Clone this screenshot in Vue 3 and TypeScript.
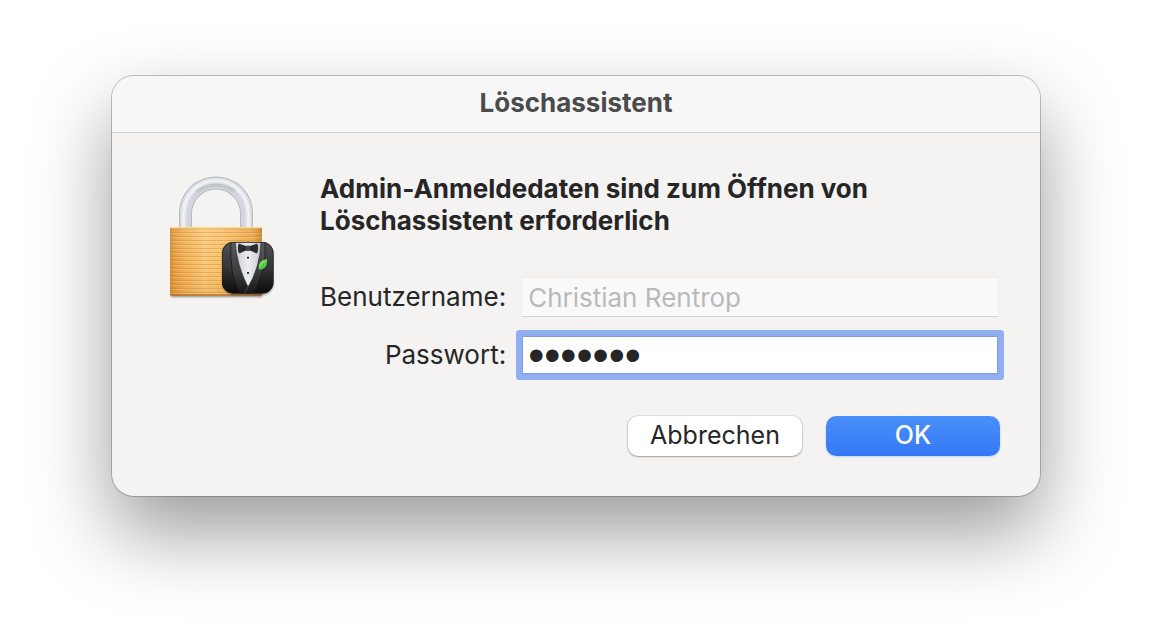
<script setup lang="ts">
import { onMounted, ref } from 'vue'

const appName = 'Löschassistent'
const username = ref('Christian Rentrop')
const password = ref('passwor')
const open = ref(true)
const passwordField = ref<HTMLInputElement | null>(null)

// y offsets of the brushed grooves on the padlock body
const grooves = Array.from({ length: 16 }, (_, i) => 232 + i * 4)

onMounted(() => passwordField.value?.focus())

function close() {
  open.value = false
}
</script>

<template>
  <main class="desktop">
    <section v-if="open" class="dialog" role="dialog" aria-labelledby="dialog-title">
      <header class="titlebar">
        <h1 id="dialog-title">{{ appName }}</h1>
      </header>
      <div class="body">
        <svg class="lock" viewBox="162 170 120 132" aria-hidden="true">
          <defs>
            <linearGradient id="gold" x1="0" x2="1" y1="0" y2="0">
              <stop offset="0" stop-color="#c9822f" />
              <stop offset="0.04" stop-color="#e09a42" />
              <stop offset="0.14" stop-color="#efaf57" />
              <stop offset="0.38" stop-color="#fbcc80" />
              <stop offset="0.6" stop-color="#f8c16e" />
              <stop offset="0.9" stop-color="#eaa549" />
              <stop offset="1" stop-color="#c47a26" />
            </linearGradient>
            <linearGradient id="goldShade" x1="0" x2="0" y1="0" y2="1">
              <stop offset="0" stop-color="#fff" stop-opacity="0.1" />
              <stop offset="0.5" stop-color="#f5a030" stop-opacity="0.08" />
              <stop offset="1" stop-color="#c77818" stop-opacity="0.22" />
            </linearGradient>
            <linearGradient id="cloth" x1="0" x2="0" y1="0" y2="1">
              <stop offset="0" stop-color="#505152" />
              <stop offset="0.5" stop-color="#343536" />
              <stop offset="1" stop-color="#0a0a0a" />
            </linearGradient>
            <linearGradient id="lapel" x1="0" x2="0" y1="0" y2="1">
              <stop offset="0" stop-color="#5a5b5c" />
              <stop offset="0.6" stop-color="#3a3b3c" />
              <stop offset="1" stop-color="#141414" />
            </linearGradient>
            <linearGradient id="shirt" x1="0" x2="1" y1="0" y2="0">
              <stop offset="0" stop-color="#c6cace" />
              <stop offset="0.5" stop-color="#eceef0" />
              <stop offset="1" stop-color="#c6cace" />
            </linearGradient>
            <linearGradient id="leaf" x1="0" x2="1" y1="0" y2="1">
              <stop offset="0" stop-color="#a0f780" />
              <stop offset="1" stop-color="#2fb82d" />
            </linearGradient>
            <filter id="soft" x="-20%" y="-200%" width="140%" height="500%">
              <feGaussianBlur stdDeviation="1" />
            </filter>
            <filter id="sheen" x="-20%" y="-20%" width="140%" height="140%">
              <feGaussianBlur stdDeviation="1.2" />
            </filter>
            <clipPath id="badge">
              <rect x="222" y="242" width="51.500" height="51.500" rx="11" />
            </clipPath>
            <clipPath id="aboveBody">
              <rect x="162" y="170" width="110" height="58" />
            </clipPath>
          </defs>

          <g fill="none" clip-path="url(#aboveBody)">
            <path d="M185.500 232V213.500a30.500 30.500 0 0 1 61 0V232" stroke="#a9aeb5" stroke-width="13" />
            <path d="M185.500 232V213.500a30.500 30.500 0 0 1 61 0V232" stroke="#d3d7dd" stroke-width="11.600" />
            <path d="M183.700 232V213a32.300 32.300 0 0 1 64.600 0V232" stroke="#f4f6f9" stroke-width="3.500" filter="url(#sheen)" />
            <path d="M197 192q8-7 19-7t19 7" stroke="#8d939b" stroke-width="2.500" opacity="0.400" filter="url(#sheen)" />
          </g>

          <rect x="171" y="294" width="91" height="3" fill="#555" opacity="0.650" filter="url(#soft)" />
          <rect x="170" y="227" width="92" height="68.500" rx="1.500" fill="url(#gold)" />
          <rect x="170" y="227" width="92" height="68.500" rx="1.500" fill="url(#goldShade)" />
          <g v-for="y in grooves" :key="y">
            <rect x="170" :y="y" width="92" height="1" fill="#cf8a36" opacity="0.450" />
            <rect x="170" :y="y + 1" width="92" height="1" fill="#ffe1a4" opacity="0.250" />
          </g>
          <rect x="170.500" y="227" width="91" height="1.500" rx="0.700" fill="#f8dc91" />
          <rect x="170.500" y="228.500" width="91" height="0.800" fill="#c58a3b" opacity="0.500" />
          <rect x="170.500" y="294.500" width="91" height="1" fill="#9c5d17" />

          <rect x="223" y="244" width="50" height="51" rx="11" fill="#333" opacity="0.550" filter="url(#soft)" />
          <g clip-path="url(#badge)">
            <rect x="222" y="242" width="52" height="52" fill="url(#cloth)" />
            <path d="M231 242Q229 274 240 294H244L248 287Q237 266 235 242Z" fill="url(#lapel)" />
            <path d="M265 242Q267 272 253 294H244L248 287Q260 268 261 242Z" fill="url(#lapel)" />
            <path d="M235 242H261Q260 268 248 287Q237 266 235 242Z" fill="url(#shirt)" stroke="#1b1b1b" stroke-width="0.600" />
            <path d="M231 242Q229 274 240 294M265 242Q267 272 253 294" fill="none" stroke="#161616" stroke-width="0.700" />
            <path d="M248 287l-4 7" stroke="#666" stroke-width="0.600" />
            <path d="M238.300 244.500q1-1.300 3 0l4.700 1.500h4l4.700-1.500q2-1.300 3 0 1 4-.2 8-.8 1.300-2.800 0L250 250.500h-4l-4.700 2q-2 1.300-2.800 0-1-4-.2-8Z" fill="#2b2c2d" />
            <rect x="246" y="245.500" width="4" height="5.500" rx="1" fill="#4a4b4c" />
            <rect x="247" y="256.800" width="2" height="1.800" rx="0.600" fill="#111" />
            <rect x="247" y="272" width="2" height="1.800" rx="0.600" fill="#111" />
            <path d="M267 259q.8 7.500-3.600 9.700-2.600.9-4.600.9-.7-7 4-9.300Z" fill="url(#leaf)" />
            <path d="M259 270l5-6.500" stroke="#249a2c" stroke-width="0.600" />
          </g>
          <rect x="222.400" y="242.400" width="50.700" height="50.700" rx="10.600" fill="none" stroke="#222" stroke-width="0.800" />
        </svg>

        <form class="auth" @submit.prevent="close">
          <p class="message">Admin-Anmeldedaten sind zum Öffnen von {{ appName }} erforderlich</p>
          <div class="fields">
            <label for="username">Benutzername:</label>
            <input id="username" v-model="username" type="text" disabled />
            <label for="password">Passwort:</label>
            <input id="password" ref="passwordField" v-model="password" type="password" />
          </div>
          <div class="actions">
            <button type="button" class="cancel" @click="close">Abbrechen</button>
            <button type="submit" class="confirm">OK</button>
          </div>
        </form>
      </div>
    </section>
  </main>
</template>

<style>
body {
  margin: 0;
  background: #fff;
}
</style>

<style scoped>
.desktop {
  box-sizing: border-box;
  min-height: 100vh;
  padding: 76px 112px 148px;
  overflow: hidden;
  font-family: Inter, "Liberation Sans", sans-serif;
  font-size: 26px;
  line-height: 32px;
  color: #262626;
}

.dialog {
  border-radius: 22px;
  background: #f4f3f1;
  box-shadow:
    0 0 0 1px rgba(0, 0, 0, 0.22),
    0 36px 80px rgba(0, 0, 0, 0.4);
}

.titlebar {
  box-sizing: border-box;
  display: flex;
  align-items: center;
  justify-content: center;
  height: 57px;
  padding-bottom: 2px;
  border-bottom: 1px solid #cfcfcf;
  border-radius: 22px 22px 0 0;
  background: #f7f7f7;
}

.titlebar h1 {
  margin: 0;
  font-size: 26px;
  line-height: 32px;
  font-weight: 700;
  color: #4b4b4b;
}

.body {
  display: flex;
  align-items: flex-start;
  gap: 38px;
  padding: 37px 40px 40px 50px;
}

.lock {
  flex: none;
  width: 120px;
  height: 132px;
}

.auth {
  flex: 1;
  min-width: 0;
  padding-top: 3px;
}

.message {
  max-width: 600px;
  margin: 0 0 41px;
  font-weight: 700;
}

.fields {
  display: grid;
  grid-template-columns: auto 1fr;
  align-items: center;
  gap: 20px 16px;
  padding-right: 2px;
}

.fields label {
  text-align: right;
}

.fields input {
  box-sizing: border-box;
  width: 100%;
  min-width: 0;
  height: 38px;
  padding: 0 6px;
  border: 0;
  outline: 0;
  font: inherit;
  color: #262626;
  background: #fff;
}

.fields input:disabled {
  color: #b9b9b9;
  background: #f9f9f9;
  box-shadow: 0 1px 0 #d5d5d5, 0 0 0 1px #efeeed;
}

.fields input[type="password"] {
  padding: 0 5px;
  border: 1px solid #819de0;
  font-family: "Liberation Sans", sans-serif;
  font-size: 46px;
}

.fields input:focus {
  border-radius: 1px;
  box-shadow: 0 0 0 6px #91aef2;
  caret-color: transparent;
}

.actions {
  display: flex;
  justify-content: flex-end;
  gap: 24px;
  margin-top: 42px;
}

.actions button {
  width: 174px;
  height: 40px;
  padding: 0 0 2px;
  border: 0;
  border-radius: 10px;
  font: inherit;
  font-size: 25px;
}

.cancel {
  color: #262626;
  background: #fff;
  box-shadow: 0 0 0 1px rgba(0, 0, 0, 0.07), 0 1px 2px rgba(0, 0, 0, 0.3);
}

.actions .confirm {
  font-weight: 500;
  color: #fff;
  background: linear-gradient(#4a90f8, #3478f6);
  box-shadow: 0 1px 2px rgba(52, 120, 246, 0.25);
}
</style>
